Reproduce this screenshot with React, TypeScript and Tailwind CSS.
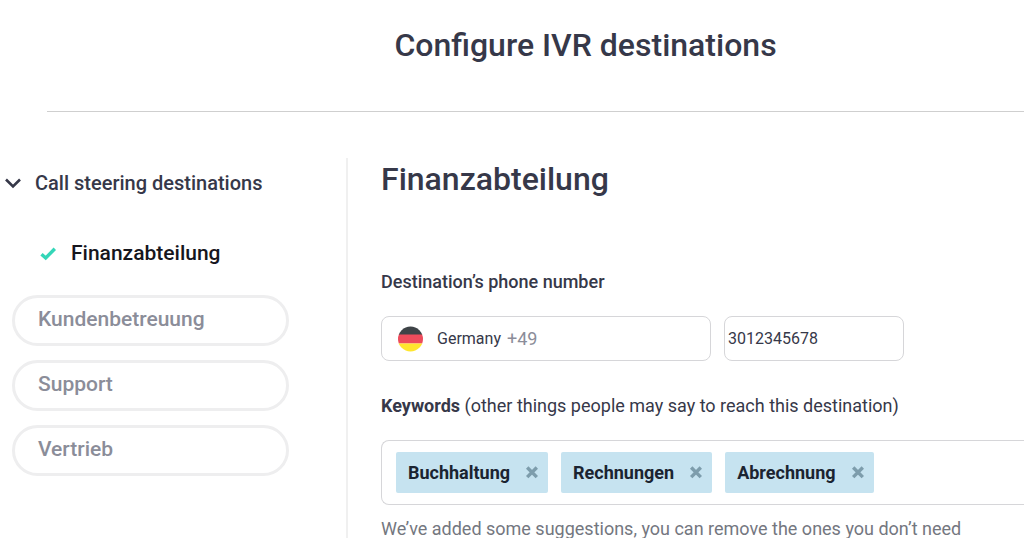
import React, { useState } from 'react'
import { clsx } from 'clsx'

interface Destination {
  id: string
  name: string
  phone: string
  keywords: string[]
}

const DESTINATIONS: Destination[] = [
  { id: 'finance', name: 'Finanzabteilung', phone: '3012345678', keywords: ['Buchhaltung', 'Rechnungen', 'Abrechnung'] },
  { id: 'care', name: 'Kundenbetreuung', phone: '', keywords: [] },
  { id: 'support', name: 'Support', phone: '', keywords: [] },
  { id: 'sales', name: 'Vertrieb', phone: '', keywords: [] },
]

export default function App() {
  const [destinations, setDestinations] = useState(DESTINATIONS)
  const [activeId, setActiveId] = useState('finance')
  const active = destinations.find(d => d.id === activeId)!

  function update(patch: Partial<Destination>) {
    setDestinations(list => list.map(d => (d.id === activeId ? { ...d, ...patch } : d)))
  }

  return (
    <div className="h-screen overflow-hidden bg-white font-['Roboto',sans-serif] text-[#363849]">
      <header className="ml-[47px] border-b border-[#cfcfcf] pt-6 pb-[45px] pl-[100px] text-center">
        <h1 className="text-[32px] leading-[42px] font-medium">Configure IVR destinations</h1>
      </header>

      <div className="mt-[46px] flex">
        <Sidebar destinations={destinations} activeId={activeId} onSelect={setActiveId} />
        <DestinationForm destination={active} onChange={update} />
      </div>
    </div>
  )
}

function Sidebar({
  destinations,
  activeId,
  onSelect,
}: {
  destinations: Destination[]
  activeId: string
  onSelect: (id: string) => void
}) {
  const [open, setOpen] = useState(true)

  return (
    <nav className="min-h-[400px] w-[348px] shrink-0 border-r-2 border-[#f0f0f0]">
      <button onClick={() => setOpen(!open)} aria-expanded={open} className="mt-3 flex items-center pl-1 text-xl leading-[26px] font-medium">
        <ChevronIcon className={clsx('mr-[13px] h-[18px] w-[18px]', !open && '-rotate-90')} />
        Call steering destinations
      </button>

      {open && (
        <ul className="mt-8 pr-[57px] pl-3">
          {destinations.map(d => (
            <li key={d.id}>
              {d.id === activeId ? (
                <button
                  onClick={() => onSelect(d.id)}
                  aria-current="true"
                  className="mb-[17px] flex h-[50px] w-full items-center pl-[27px] text-[21px] leading-[26px] font-medium text-[#16161d]"
                >
                  <CheckIcon className="mr-[14px] h-[18px] w-[18px]" />
                  {d.name}
                </button>
              ) : (
                <button
                  onClick={() => onSelect(d.id)}
                  className="mb-[14px] flex h-[51px] w-full rounded-full border-3 border-[#eeeeef] pt-2 pl-[23px] text-[21px] leading-[26px] font-medium text-[#8b8d99]"
                >
                  {d.name}
                </button>
              )}
            </li>
          ))}
        </ul>
      )}
    </nav>
  )
}

function DestinationForm({
  destination,
  onChange,
}: {
  destination: Destination
  onChange: (patch: Partial<Destination>) => void
}) {
  return (
    <main className="min-w-0 flex-1 pl-[33px]">
      <h2 className="text-[32px] leading-[42px] font-medium">{destination.name}</h2>

      <label htmlFor="phone" className="mt-[70px] block text-lg leading-6 font-medium">
        Destination’s phone number
      </label>
      <div className="mt-[22px] flex gap-[13px]">
        <button
          aria-haspopup="listbox"
          aria-label="Germany +49"
          className="flex h-[45px] w-[330px] items-center rounded-lg border border-[#d6d6d9] pl-4 text-base"
        >
          <GermanyFlag className="mr-[13px] h-[26px] w-[26px]" />
          Germany
          <span className="ml-1.5 text-lg text-[#8b8d99]">+49</span>
        </button>
        <input
          id="phone"
          type="tel"
          value={destination.phone}
          onChange={e => onChange({ phone: e.target.value })}
          className="h-[45px] w-[180px] rounded-lg border border-[#d6d6d9] px-[3px] text-base outline-none"
        />
      </div>

      <p className="mt-[33px] text-lg leading-6">
        <span className="font-bold">Keywords</span> (other things people may say to reach this destination)
      </p>
      <ul className="mt-[22px] flex h-[65px] items-center gap-[13px] rounded-l-lg border border-r-0 border-[#d6d6d9] pl-[14px]">
        {destination.keywords.map(word => (
          <li key={word} className="flex h-[41px] items-center rounded-xs bg-[#c6e3f0] pr-2 pl-3 text-lg font-bold text-[#1b2431]">
            {word}
            <button
              aria-label={`Remove ${word}`}
              onClick={() => onChange({ keywords: destination.keywords.filter(k => k !== word) })}
              className="ml-[14px]"
            >
              <RemoveIcon className="h-4 w-4" />
            </button>
          </li>
        ))}
      </ul>
      <p className="mt-3 text-lg leading-6 text-[#74777f]">
        We’ve added some suggestions, you can remove the ones you don’t need
      </p>
    </main>
  )
}

function ChevronIcon({ className }: { className?: string }) {
  return (
    <svg viewBox="0 0 18 18" fill="none" stroke="#363849" strokeWidth="2.600" className={className}>
      <path d="M2 5.500 9 12.500l7-7" />
    </svg>
  )
}

function CheckIcon({ className }: { className?: string }) {
  return (
    <svg viewBox="0 0 18 18" fill="none" stroke="#34d6b8" strokeWidth="3.400" className={className}>
      <path d="M2.500 10.200 6.700 14 15.800 4.800" />
    </svg>
  )
}

function RemoveIcon({ className }: { className?: string }) {
  return (
    <svg viewBox="0 0 16 16" fill="none" stroke="#7d9dac" strokeWidth="3.400" className={className}>
      <path d="m3.200 2.500 9.600 9.600M12.800 2.500 3.200 12.100" />
    </svg>
  )
}

function GermanyFlag({ className }: { className?: string }) {
  return (
    <svg viewBox="0 0 26 26" className={className}>
      <clipPath id="flag-de">
        <circle cx="12.500" cy="13" r="12.500" />
      </clipPath>
      <g clipPath="url(#flag-de)">
        <path fill="#3e4347" d="M0 0h26v9H0z" />
        <path fill="#ed4c5c" d="M0 8.500h26v9H0z" />
        <path fill="#ffe62e" d="M0 17.500h26V26H0z" />
      </g>
    </svg>
  )
}
